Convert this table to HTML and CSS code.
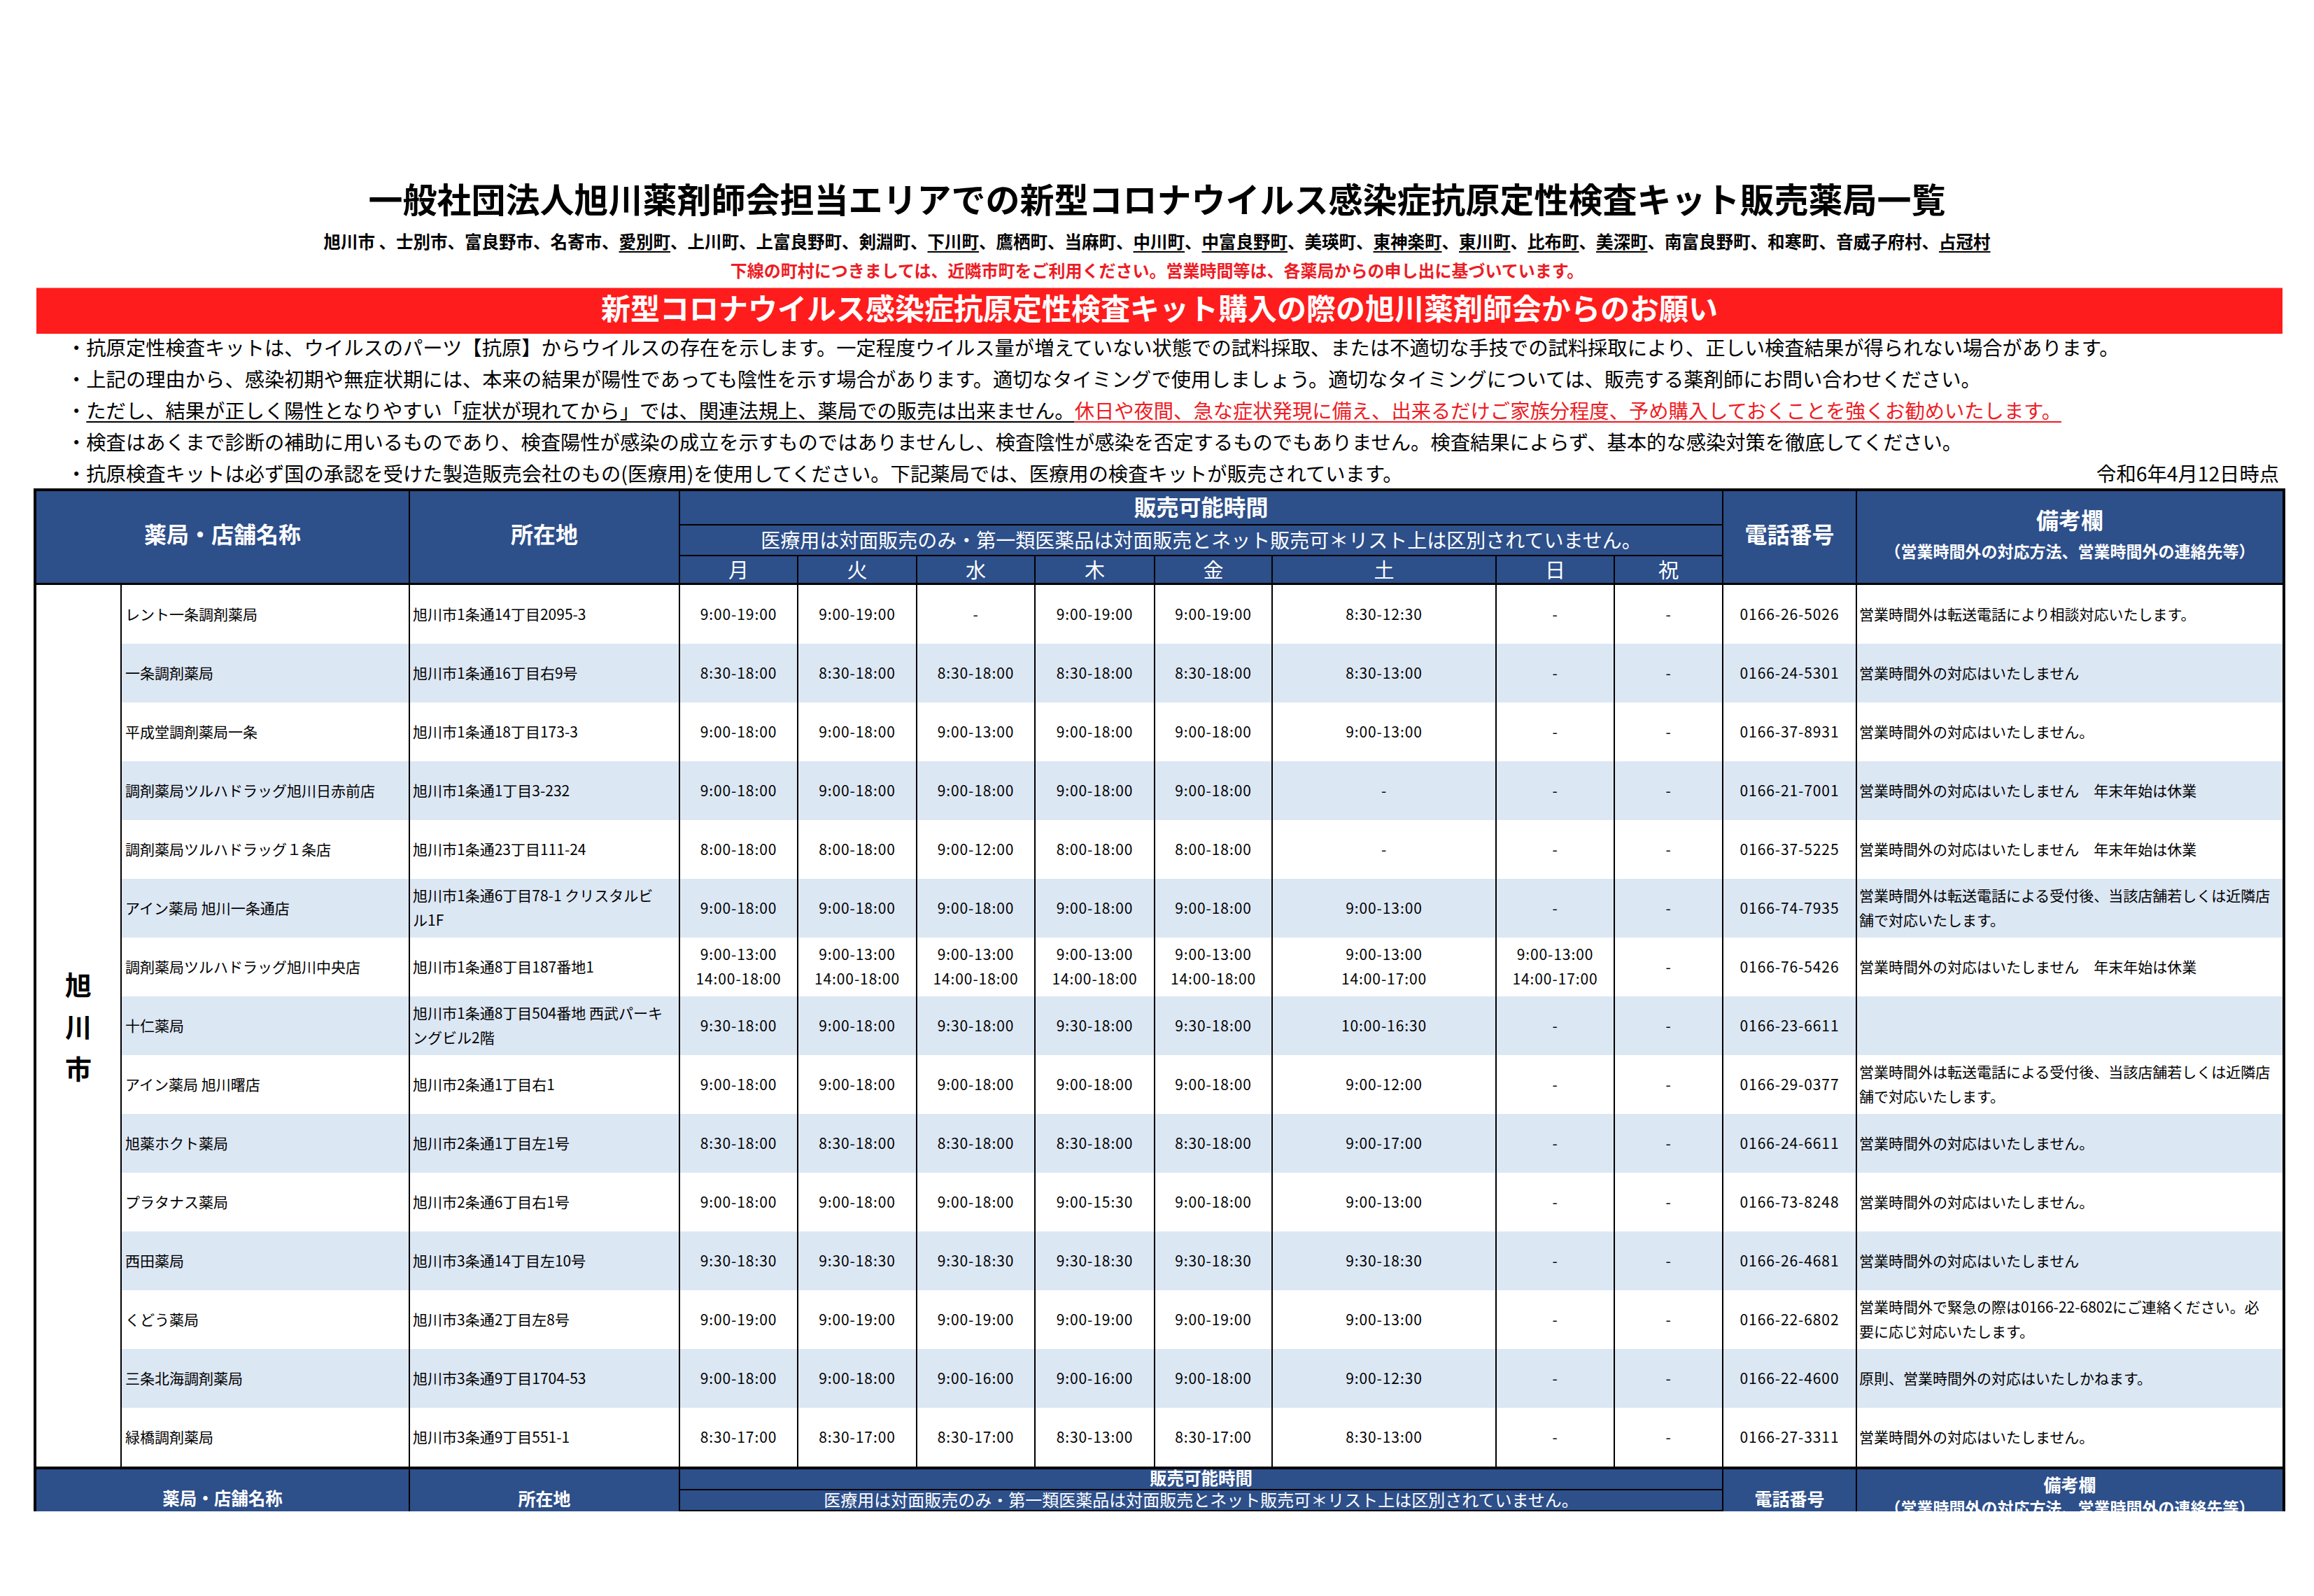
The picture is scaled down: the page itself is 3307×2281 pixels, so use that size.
FILE: index.html
```html
<!DOCTYPE html>
<html lang="ja">
<head>
<meta charset="utf-8">
<title>抗原定性検査キット販売薬局一覧</title>
<link rel="stylesheet" href="styles.css">
</head>
<body>
<div class="page">
  <h1 class="title">一般社団法人旭川薬剤師会担当エリアでの新型コロナウイルス感染症抗原定性検査キット販売薬局一覧</h1>
  <p class="towns">旭川市 、士別市、富良野市、名寄市、<span class="u">愛別町</span>、上川町、上富良野町、剣淵町、<span class="u">下川町</span>、鷹栖町、当麻町、<span class="u">中川町</span>、<span class="u">中富良野町</span>、美瑛町、<span class="u">東神楽町</span>、<span class="u">東川町</span>、<span class="u">比布町</span>、<span class="u">美深町</span>、南富良野町、和寒町、音威子府村、<span class="u">占冠村</span></p>
  <p class="note">下線の町村につきましては、近隣市町をご利用ください。営業時間等は、各薬局からの申し出に基づいています。</p>
  <div class="banner">新型コロナウイルス感染症抗原定性検査キット購入の際の旭川薬剤師会からのお願い</div>
  <ul class="bullets">
    <li>・抗原定性検査キットは、ウイルスのパーツ【抗原】からウイルスの存在を示します。一定程度ウイルス量が増えていない状態での試料採取、または不適切な手技での試料採取により、正しい検査結果が得られない場合があります。</li>
    <li>・上記の理由から、感染初期や無症状期には、本来の結果が陽性であっても陰性を示す場合があります。適切なタイミングで使用しましょう。適切なタイミングについては、販売する薬剤師にお問い合わせください。</li>
    <li>・<span class="ul-black">ただし、結果が正しく陽性となりやすい「症状が現れてから」では、関連法規上、薬局での販売は出来ません。</span><span class="ul-red">休日や夜間、急な症状発現に備え、出来るだけご家族分程度、予め購入しておくことを強くお勧めいたします。</span></li>
    <li>・検査はあくまで診断の補助に用いるものであり、検査陽性が感染の成立を示すものではありませんし、検査陰性が感染を否定するものでもありません。検査結果によらず、基本的な感染対策を徹底してください。</li>
    <li class="last"><span>・抗原検査キットは必ず国の承認を受けた製造販売会社のもの(医療用)を使用してください。下記薬局では、医療用の検査キットが販売されています。</span><span>令和6年4月12日時点</span></li>
  </ul>

  <div class="sheet">
    <div class="hd hd-name">薬局・店舗名称</div>
    <div class="hd hd-addr">所在地</div>
    <div class="hd hd-hours">販売可能時間</div>
    <div class="hd hd-sub">医療用は対面販売のみ・第一類医薬品は対面販売とネット販売可＊リスト上は区別されていません。</div>
    <div class="hd hd-day">月</div>
    <div class="hd hd-day">火</div>
    <div class="hd hd-day">水</div>
    <div class="hd hd-day">木</div>
    <div class="hd hd-day">金</div>
    <div class="hd hd-day">土</div>
    <div class="hd hd-day">日</div>
    <div class="hd hd-day">祝</div>
    <div class="hd hd-tel">電話番号</div>
    <div class="hd hd-note"><span class="note-main">備考欄</span><span class="note-sub">（営業時間外の対応方法、営業時間外の連絡先等）</span></div>

    <div class="region">旭<br>川<br>市</div>

    <div class="row">
      <div class="n">レント一条調剤薬局</div><div class="a">旭川市1条通14丁目2095-3</div>
      <div class="t">9:00-19:00</div><div class="t">9:00-19:00</div><div class="t">-</div><div class="t">9:00-19:00</div><div class="t">9:00-19:00</div><div class="t">8:30-12:30</div><div class="t">-</div><div class="t">-</div>
      <div class="p">0166-26-5026</div><div class="r">営業時間外は転送電話により相談対応いたします。</div>
    </div>
    <div class="row alt">
      <div class="n">一条調剤薬局</div><div class="a">旭川市1条通16丁目右9号</div>
      <div class="t">8:30-18:00</div><div class="t">8:30-18:00</div><div class="t">8:30-18:00</div><div class="t">8:30-18:00</div><div class="t">8:30-18:00</div><div class="t">8:30-13:00</div><div class="t">-</div><div class="t">-</div>
      <div class="p">0166-24-5301</div><div class="r">営業時間外の対応はいたしません</div>
    </div>
    <div class="row">
      <div class="n">平成堂調剤薬局一条</div><div class="a">旭川市1条通18丁目173-3</div>
      <div class="t">9:00-18:00</div><div class="t">9:00-18:00</div><div class="t">9:00-13:00</div><div class="t">9:00-18:00</div><div class="t">9:00-18:00</div><div class="t">9:00-13:00</div><div class="t">-</div><div class="t">-</div>
      <div class="p">0166-37-8931</div><div class="r">営業時間外の対応はいたしません。</div>
    </div>
    <div class="row alt">
      <div class="n">調剤薬局ツルハドラッグ旭川日赤前店</div><div class="a">旭川市1条通1丁目3-232</div>
      <div class="t">9:00-18:00</div><div class="t">9:00-18:00</div><div class="t">9:00-18:00</div><div class="t">9:00-18:00</div><div class="t">9:00-18:00</div><div class="t">-</div><div class="t">-</div><div class="t">-</div>
      <div class="p">0166-21-7001</div><div class="r">営業時間外の対応はいたしません　年末年始は休業</div>
    </div>
    <div class="row">
      <div class="n">調剤薬局ツルハドラッグ１条店</div><div class="a">旭川市1条通23丁目111-24</div>
      <div class="t">8:00-18:00</div><div class="t">8:00-18:00</div><div class="t">9:00-12:00</div><div class="t">8:00-18:00</div><div class="t">8:00-18:00</div><div class="t">-</div><div class="t">-</div><div class="t">-</div>
      <div class="p">0166-37-5225</div><div class="r">営業時間外の対応はいたしません　年末年始は休業</div>
    </div>
    <div class="row alt">
      <div class="n">アイン薬局 旭川一条通店</div><div class="a">旭川市1条通6丁目78-1 クリスタルビ<br>ル1F</div>
      <div class="t">9:00-18:00</div><div class="t">9:00-18:00</div><div class="t">9:00-18:00</div><div class="t">9:00-18:00</div><div class="t">9:00-18:00</div><div class="t">9:00-13:00</div><div class="t">-</div><div class="t">-</div>
      <div class="p">0166-74-7935</div><div class="r">営業時間外は転送電話による受付後、当該店舗若しくは近隣店<br>舗で対応いたします。</div>
    </div>
    <div class="row">
      <div class="n">調剤薬局ツルハドラッグ旭川中央店</div><div class="a">旭川市1条通8丁目187番地1</div>
      <div class="t">9:00-13:00<br>14:00-18:00</div><div class="t">9:00-13:00<br>14:00-18:00</div><div class="t">9:00-13:00<br>14:00-18:00</div><div class="t">9:00-13:00<br>14:00-18:00</div><div class="t">9:00-13:00<br>14:00-18:00</div><div class="t">9:00-13:00<br>14:00-17:00</div><div class="t">9:00-13:00<br>14:00-17:00</div><div class="t">-</div>
      <div class="p">0166-76-5426</div><div class="r">営業時間外の対応はいたしません　年末年始は休業</div>
    </div>
    <div class="row alt">
      <div class="n">十仁薬局</div><div class="a">旭川市1条通8丁目504番地 西武パーキ<br>ングビル2階</div>
      <div class="t">9:30-18:00</div><div class="t">9:00-18:00</div><div class="t">9:30-18:00</div><div class="t">9:30-18:00</div><div class="t">9:30-18:00</div><div class="t">10:00-16:30</div><div class="t">-</div><div class="t">-</div>
      <div class="p">0166-23-6611</div><div class="r"></div>
    </div>
    <div class="row">
      <div class="n">アイン薬局 旭川曙店</div><div class="a">旭川市2条通1丁目右1</div>
      <div class="t">9:00-18:00</div><div class="t">9:00-18:00</div><div class="t">9:00-18:00</div><div class="t">9:00-18:00</div><div class="t">9:00-18:00</div><div class="t">9:00-12:00</div><div class="t">-</div><div class="t">-</div>
      <div class="p">0166-29-0377</div><div class="r">営業時間外は転送電話による受付後、当該店舗若しくは近隣店<br>舗で対応いたします。</div>
    </div>
    <div class="row alt">
      <div class="n">旭薬ホクト薬局</div><div class="a">旭川市2条通1丁目左1号</div>
      <div class="t">8:30-18:00</div><div class="t">8:30-18:00</div><div class="t">8:30-18:00</div><div class="t">8:30-18:00</div><div class="t">8:30-18:00</div><div class="t">9:00-17:00</div><div class="t">-</div><div class="t">-</div>
      <div class="p">0166-24-6611</div><div class="r">営業時間外の対応はいたしません。</div>
    </div>
    <div class="row">
      <div class="n">プラタナス薬局</div><div class="a">旭川市2条通6丁目右1号</div>
      <div class="t">9:00-18:00</div><div class="t">9:00-18:00</div><div class="t">9:00-18:00</div><div class="t">9:00-15:30</div><div class="t">9:00-18:00</div><div class="t">9:00-13:00</div><div class="t">-</div><div class="t">-</div>
      <div class="p">0166-73-8248</div><div class="r">営業時間外の対応はいたしません。</div>
    </div>
    <div class="row alt">
      <div class="n">西田薬局</div><div class="a">旭川市3条通14丁目左10号</div>
      <div class="t">9:30-18:30</div><div class="t">9:30-18:30</div><div class="t">9:30-18:30</div><div class="t">9:30-18:30</div><div class="t">9:30-18:30</div><div class="t">9:30-18:30</div><div class="t">-</div><div class="t">-</div>
      <div class="p">0166-26-4681</div><div class="r">営業時間外の対応はいたしません</div>
    </div>
    <div class="row">
      <div class="n">くどう薬局</div><div class="a">旭川市3条通2丁目左8号</div>
      <div class="t">9:00-19:00</div><div class="t">9:00-19:00</div><div class="t">9:00-19:00</div><div class="t">9:00-19:00</div><div class="t">9:00-19:00</div><div class="t">9:00-13:00</div><div class="t">-</div><div class="t">-</div>
      <div class="p">0166-22-6802</div><div class="r">営業時間外で緊急の際は0166-22-6802にご連絡ください。必<br>要に応じ対応いたします。</div>
    </div>
    <div class="row alt">
      <div class="n">三条北海調剤薬局</div><div class="a">旭川市3条通9丁目1704-53</div>
      <div class="t">9:00-18:00</div><div class="t">9:00-18:00</div><div class="t">9:00-16:00</div><div class="t">9:00-16:00</div><div class="t">9:00-18:00</div><div class="t">9:00-12:30</div><div class="t">-</div><div class="t">-</div>
      <div class="p">0166-22-4600</div><div class="r">原則、営業時間外の対応はいたしかねます。</div>
    </div>
    <div class="row">
      <div class="n">緑橋調剤薬局</div><div class="a">旭川市3条通9丁目551-1</div>
      <div class="t">8:30-17:00</div><div class="t">8:30-17:00</div><div class="t">8:30-17:00</div><div class="t">8:30-13:00</div><div class="t">8:30-17:00</div><div class="t">8:30-13:00</div><div class="t">-</div><div class="t">-</div>
      <div class="p">0166-27-3311</div><div class="r">営業時間外の対応はいたしません。</div>
    </div>
  </div>

  <div class="sheet2">
    <div class="h2 h2-name">薬局・店舗名称</div>
    <div class="h2 h2-addr">所在地</div>
    <div class="h2 h2-hours">販売可能時間</div>
    <div class="h2 h2-sub">医療用は対面販売のみ・第一類医薬品は対面販売とネット販売可＊リスト上は区別されていません。</div>
    <div class="h2 h2-tel">電話番号</div>
    <div class="h2 h2-note"><span class="n2-main">備考欄</span><span class="n2-sub">（営業時間外の対応方法、営業時間外の連絡先等）</span></div>
  </div>
</div>
</body>
</html>
```

FILE: styles.css
```css
html, body {
  margin: 0;
  padding: 0;
  background: #ffffff;
}

body {
  font-family: "Noto Sans CJK JP", "Noto Sans", sans-serif;
  color: #000000;
}

.page {
  width: 3307px;
  height: 2281px;
  overflow: hidden;
  padding-top: 253px;
  box-sizing: border-box;
}

.title {
  margin: 0;
  font-size: 49px;
  font-weight: 700;
  line-height: 60px;
  text-align: center;
}

.towns {
  margin: 17px 0 0;
  font-size: 24.5px;
  font-weight: 700;
  line-height: 30px;
  text-align: center;
}

.towns .u {
  text-decoration: underline;
  text-decoration-thickness: 2px;
  text-underline-offset: 4px;
}

.note {
  margin: 11px 0 0;
  font-size: 24px;
  font-weight: 700;
  line-height: 30px;
  text-align: center;
  color: #ee1c24;
}

.banner {
  margin: 10px 45px 0 52px;
  height: 66px;
  background: #ff1c1c;
  border-top: 1px solid #f88;
  box-sizing: border-box;
  color: #ffffff;
  font-size: 42px;
  font-weight: 700;
  line-height: 54px;
  text-align: center;
}

.bullets {
  list-style: none;
  margin: -4px 0 0;
  padding: 0 50px 0 95px;
  font-size: 28.3px;
  line-height: 45px;
  white-space: nowrap;
}

.bullets li {
  margin: 0;
  padding: 0;
}

.bullets .last {
  display: flex;
  justify-content: space-between;
}

.ul-black {
  text-decoration: underline;
  text-decoration-thickness: 2px;
  text-underline-offset: 4px;
}

.ul-red {
  color: #ee1c24;
  text-decoration: underline;
  text-decoration-color: #ee1c24;
  text-decoration-thickness: 2px;
  text-underline-offset: 4px;
}

/* ---------- main table ---------- */
.sheet {
  display: grid;
  margin-left: 48px;
  width: 3218px;
  box-sizing: border-box;
  border: 4px solid #000;
  background: #000;
  column-gap: 2px;
  grid-template-columns: 120px 410px 384px 167px 168px 167px 169px 166px 318px 167px 153px 189px 608px;
  grid-template-rows: 49px 44px 41px repeat(15, 84px);
}

.hd {
  background: #2d4f8a;
  color: #ffffff;
  display: flex;
  align-items: center;
  justify-content: center;
  box-sizing: border-box;
  text-align: center;
}

.hd-name {
  grid-column: 1 / 3;
  grid-row: 1 / 4;
  border-bottom: 3px solid #000;
  font-size: 32px;
  font-weight: 700;
  padding-bottom: 12px;
}

.hd-addr {
  grid-column: 3;
  grid-row: 1 / 4;
  border-bottom: 3px solid #000;
  font-size: 32px;
  font-weight: 700;
  padding-bottom: 12px;
}

.hd-hours {
  grid-column: 4 / 12;
  grid-row: 1;
  border-bottom: 2px solid #000;
  font-size: 32px;
  font-weight: 700;
  padding-bottom: 6px;
}

.hd-sub {
  grid-column: 4 / 12;
  grid-row: 2;
  border-bottom: 2px solid #000;
  font-size: 28px;
  padding-bottom: 3px;
}

.hd-day {
  grid-row: 3;
  border-bottom: 3px solid #000;
  font-size: 29px;
  padding-bottom: 2px;
}

.hd-tel {
  grid-column: 12;
  grid-row: 1 / 4;
  border-bottom: 3px solid #000;
  font-size: 32px;
  font-weight: 700;
  padding-bottom: 12px;
}

.hd-note {
  grid-column: 13;
  grid-row: 1 / 4;
  border-bottom: 3px solid #000;
  flex-direction: column;
  font-weight: 700;
  padding-bottom: 5px;
}

.note-main {
  font-size: 32px;
  line-height: 45px;
}

.note-sub {
  font-size: 23px;
  line-height: 45px;
}

.region {
  grid-column: 1;
  grid-row: 4 / 19;
  background: #ffffff;
  display: flex;
  align-items: center;
  justify-content: center;
  text-align: center;
  font-size: 38px;
  font-weight: 700;
  line-height: 60px;
}

.row {
  display: contents;
}

.row > div {
  background: #ffffff;
  display: flex;
  align-items: center;
  font-size: 21px;
  line-height: 35px;
  box-sizing: border-box;
  white-space: nowrap;
  overflow: hidden;
  padding-bottom: 2px;
}

.row.alt > div {
  background: #dce7f4;
}

.row > .n {
  padding-left: 5px;
}

.row > .a {
  padding-left: 4px;
}

.row > .t,
.row > .p {
  justify-content: center;
  text-align: center;
  letter-spacing: 0.9px;
}

.row > .r {
  padding-left: 3px;
}

/* ---------- repeated header (next page, clipped) ---------- */
.sheet2 {
  display: grid;
  margin-left: 48px;
  width: 3218px;
  height: 60px;
  overflow: hidden;
  box-sizing: border-box;
  border-left: 4px solid #000;
  border-right: 4px solid #000;
  background: #000;
  column-gap: 2px;
  grid-template-columns: 120px 410px 384px 167px 168px 167px 169px 166px 318px 167px 153px 189px 608px;
  grid-template-rows: 30px 30px 60px;
}

.h2 {
  background: #2d4f8a;
  color: #ffffff;
  box-sizing: border-box;
  text-align: center;
  font-weight: 700;
}

.h2-name {
  grid-column: 1 / 3;
  grid-row: 1 / 4;
  font-size: 24.5px;
  line-height: 30px;
  padding-top: 26px;
}

.h2-addr {
  grid-column: 3;
  grid-row: 1 / 4;
  font-size: 25px;
  line-height: 30px;
  padding-top: 26px;
}

.h2-hours {
  grid-column: 4 / 12;
  grid-row: 1;
  border-bottom: 2px solid #000;
  font-size: 24.5px;
  line-height: 24px;
}

.h2-sub {
  grid-column: 4 / 12;
  grid-row: 2;
  border-bottom: 2px solid #000;
  font-size: 24px;
  font-weight: 400;
  line-height: 26px;
}

.h2-tel {
  grid-column: 12;
  grid-row: 1 / 4;
  font-size: 25px;
  line-height: 30px;
  padding-top: 26px;
}

.h2-note {
  grid-column: 13;
  grid-row: 1 / 4;
  display: flex;
  flex-direction: column;
  align-items: center;
  padding-top: 6px;
}

.n2-main {
  font-size: 25px;
  line-height: 30px;
}

.n2-sub {
  font-size: 23px;
  line-height: 36px;
}
```
